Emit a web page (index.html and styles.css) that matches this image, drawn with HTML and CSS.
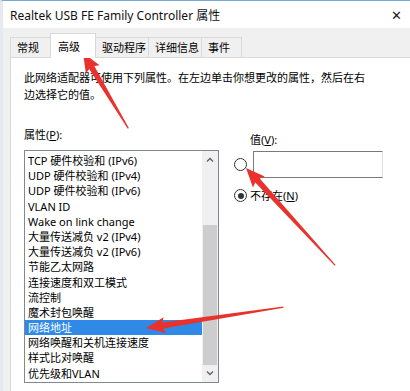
FILE: index.html
```html
<!DOCTYPE html>
<html lang="zh-CN">
<head>
    <meta charset="UTF-8">
    <title>Realtek USB FE Family Controller 属性</title>
    <link rel="stylesheet" href="styles.css">
</head>
<body>
    <div class="window">
        <div class="titlebar">
            <span class="title">Realtek USB FE Family Controller 属性</span>
            <span class="close">✕</span>
        </div>

        <div class="dialog">
            <!-- 选项卡 -->
            <div class="tabs">
                <div class="tab">常规</div>
                <div class="tab active">高级</div>
                <div class="tab">驱动程序</div>
                <div class="tab">详细信息</div>
                <div class="tab">事件</div>
            </div>

            <div class="panel">
                <p class="desc">此网络适配器可使用下列属性。在左边单击你想更改的属性，然后在右<br>边选择它的值。</p>

                <div class="columns">
                    <div class="col-left">
                        <div class="label">属性(<u>P</u>):</div>
                        <div class="listbox">
                            <ul class="items">
                                <li>TCP 硬件校验和 (IPv6)</li>
                                <li>UDP 硬件校验和 (IPv4)</li>
                                <li>UDP 硬件校验和 (IPv6)</li>
                                <li>VLAN ID</li>
                                <li>Wake on link change</li>
                                <li>大量传送减负 v2 (IPv4)</li>
                                <li>大量传送减负 v2 (IPv6)</li>
                                <li>节能乙太网路</li>
                                <li>连接速度和双工模式</li>
                                <li>流控制</li>
                                <li>魔术封包唤醒</li>
                                <li class="selected">网络地址</li>
                                <li>网络唤醒和关机连接速度</li>
                                <li>样式比对唤醒</li>
                                <li>优先级和VLAN</li>
                            </ul>
                            <div class="scrollbar">
                                <div class="sb-arrow">
                                    <svg width="8" height="5" viewBox="0 0 8 5"><path d="M1 4.5 L4 1.5 L7 4.5" fill="none" stroke="#606060" stroke-width="1.3"/></svg>
                                </div>
                                <div class="sb-track"><div class="sb-thumb"></div></div>
                                <div class="sb-arrow">
                                    <svg width="8" height="5" viewBox="0 0 8 5"><path d="M1 0.5 L4 3.5 L7 0.5" fill="none" stroke="#606060" stroke-width="1.3"/></svg>
                                </div>
                            </div>
                        </div>
                    </div>

                    <div class="col-right">
                        <div class="label value-label">值(<u>V</u>):</div>
                        <span class="radio"></span>
                        <div class="textbox"></div>
                        <span class="radio checked"></span>
                        <span class="radio-text">不存在(<u>N</u>)</span>
                    </div>
                </div>
            </div>
        </div>

        <!-- 红色标注箭头 -->
        <svg class="arrows" width="410" height="391" viewBox="0 0 410 391">
            <g fill="#e8322b">
                <polygon transform="translate(83,53) rotate(-121)" points="0,0 -19,-8 -17,-3 -88,-0.6 -88,0.6 -17,3 -19,8"/>
                <polygon transform="translate(246,168) rotate(-132.5)" points="0,0 -19,-8 -17,-3 -132,-0.6 -132,0.6 -17,3 -19,8"/>
                <polygon transform="translate(146,328) rotate(171.4)" points="0,0 -19,-8 -17,-3 -139,-0.6 -139,0.6 -17,3 -19,8"/>
            </g>
        </svg>
    </div>
</body>
</html>
```

FILE: styles.css
```css
body { margin: 0; font-family: "Noto Sans", "Noto Sans CJK SC", sans-serif; font-size: 11px; color: #000; background: #f0f0f0; }
.window { position: relative; width: 410px; height: 391px; overflow: hidden; border-top: 1px solid #7aa7d2; border-left: 3px solid #e6eaef; box-sizing: border-box; background: #f0f0f0; }
.titlebar { height: 27px; background: #fff; display: flex; align-items: center; justify-content: space-between; padding: 0 8px 0 7px; }
.title { font-size: 12px; color: #111; }
.close { font-size: 13px; color: #222; }
.dialog { padding: 4px 0 0 7px; }
.tabs { display: flex; align-items: flex-end; height: 25px; position: relative; z-index: 1; }
.tab { box-sizing: border-box; min-width: 41px; height: 20px; line-height: 19px; padding: 0 2px 0 6px; border: 1px solid #d9d9d9; border-bottom: none; margin-right: -1px; background: #f0f0f0; white-space: nowrap; }
.tab.active { min-width: 46px; height: 25px; line-height: 26px; padding-left: 7px; background: #fff; margin-bottom: -1px; }
.panel { background: #fff; border: 1px solid #d9d9d9; margin-right: -20px; height: 340px; padding: 11px 0 0 13px; }
.desc { margin: 0; line-height: 17px; }
.columns { display: flex; }
.col-left { width: 195px; flex: none; }
.label { line-height: 17px; }
.col-left .label { margin-top: 23px; margin-bottom: 6.5px; }
.listbox { display: flex; border: 1px solid #828790; height: 231px; }
.items { list-style: none; margin: 0; padding: 2.5px 0 0; flex: 1; }
.items li { height: 15.2px; line-height: 15.2px; padding-left: 3px; white-space: nowrap; }
.items li.selected { background: #3089e6; color: #fff; }
.scrollbar { width: 16px; background: #f0f0f0; display: flex; flex-direction: column; }
.sb-arrow { height: 17px; display: flex; align-items: center; justify-content: center; }
.sb-track { flex: 1; display: flex; flex-direction: column; justify-content: flex-end; padding-left: 1px; }
.sb-thumb { height: 140px; background: #cdcdcd; margin-right: 1px; }
.col-right { margin-left: 15px; padding-top: 28px; display: grid; grid-template-columns: 13px 130px; grid-template-rows: 17px 27px 17px; column-gap: 6px; row-gap: 3px; align-items: center; align-content: start; }
.value-label { grid-column: 2; margin-left: -3px; }
.radio-text { margin-left: -3px; line-height: 17px; }
.radio { box-sizing: border-box; width: 13px; height: 13px; border: 1px solid #333; border-radius: 50%; background: #fff; position: relative; }
.radio.checked { margin-top: 12px; }
.radio-text { margin-top: 12px; }
.radio.checked::after { content: ""; position: absolute; left: 2.5px; top: 2.5px; width: 6px; height: 6px; border-radius: 50%; background: #333; }
.textbox { box-sizing: border-box; width: 130px; height: 27px; border: 1px solid #7a7a7a; border-right-color: #e0e0e0; }
.arrows { position: absolute; left: -3px; top: -1px; pointer-events: none; }
```
